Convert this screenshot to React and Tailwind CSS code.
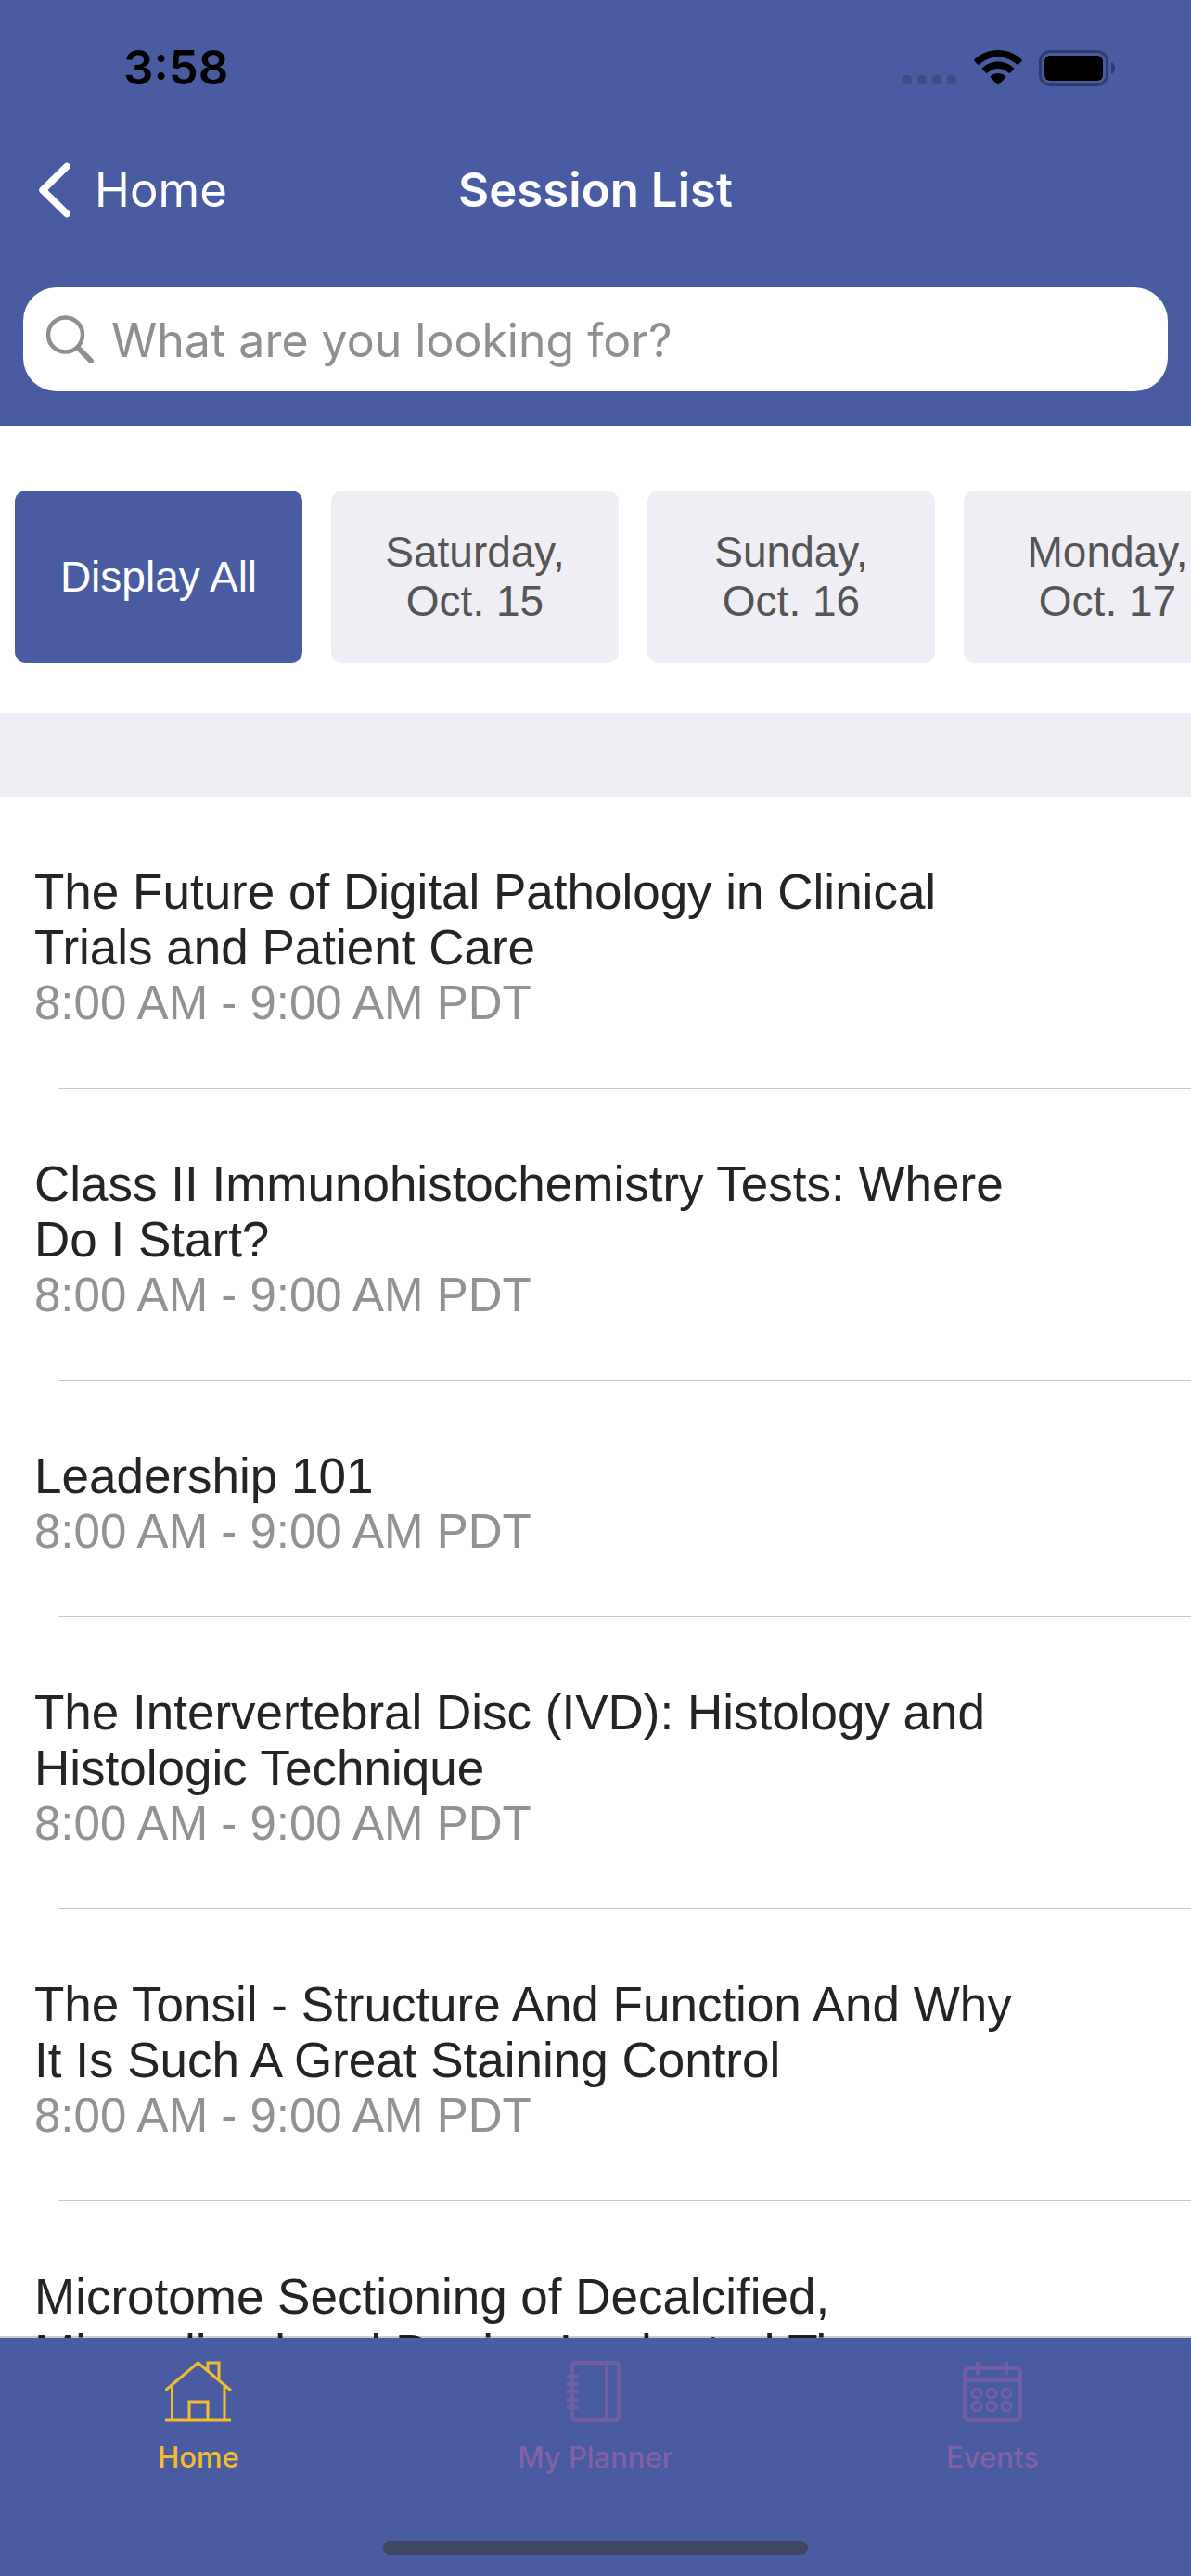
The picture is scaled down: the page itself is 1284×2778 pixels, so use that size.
import React, { useState } from "react";

const days = [
    { id: "all", lines: ["Display All"] },
    { id: "sat", lines: ["Saturday,", "Oct. 15"] },
    { id: "sun", lines: ["Sunday,", "Oct. 16"] },
    { id: "mon", lines: ["Monday,", "Oct. 17"] },
];

const sessions = [
    { id: 1, title: "The Future of Digital Pathology in Clinical Trials and Patient Care", time: "8:00 AM - 9:00 AM PDT" },
    { id: 2, title: "Class II Immunohistochemistry Tests: Where Do I Start?", time: "8:00 AM - 9:00 AM PDT" },
    { id: 3, title: "Leadership 101", time: "8:00 AM - 9:00 AM PDT" },
    { id: 4, title: "The Intervertebral Disc (IVD): Histology and Histologic Technique", time: "8:00 AM - 9:00 AM PDT" },
    { id: 5, title: "The Tonsil - Structure And Function And Why It Is Such A Great Staining Control", time: "8:00 AM - 9:00 AM PDT" },
    { id: 6, title: "Microtome Sectioning of Decalcified, Mineralized and Device Implanted Tissue", time: "8:00 AM - 9:00 AM PDT" },
];

const WifiIcon = () => (
    <svg className="w-[52px] h-[38px]" viewBox="0 0 52 38" fill="black" aria-hidden="true">
        <path d="M26 0C36 0 45 4 51.500 10.300c.5.500.5 1.200 0 1.700l-3.600 3.600c-.5.500-1.200.5-1.700 0C40.800 10.500 33.700 7.500 26 7.500S11.200 10.500 5.800 15.600c-.5.500-1.200.5-1.700 0L.5 12c-.5-.5-.5-1.200 0-1.700C7 4 16 0 26 0z" />
        <path d="M26 12.600c6.500 0 12.400 2.500 16.800 6.600.5.500.5 1.200 0 1.700l-3.700 3.700c-.5.500-1.200.5-1.700 0C34.400 21.700 30.400 20 26 20s-8.400 1.700-11.400 4.600c-.5.500-1.200.5-1.700 0l-3.700-3.700c-.5-.5-.5-1.200 0-1.700C13.600 15.100 19.500 12.600 26 12.600z" />
        <path d="M26 25c3 0 5.800 1.100 7.900 3 .5.500.5 1.200 0 1.700l-7 7.300c-.5.500-1.300.5-1.800 0l-7-7.300c-.5-.5-.5-1.200 0-1.700C20.200 26.100 23 25 26 25z" />
    </svg>
);

const BatteryIcon = () => (
    <svg className="w-[83px] h-[39px]" viewBox="0 0 83 39" aria-hidden="true">
        <rect x="1.500" y="1.500" width="72" height="36" rx="10.500" fill="none" stroke="#2f3b69" strokeWidth="3" />
        <rect x="6" y="6" width="63" height="27" rx="6" fill="black" />
        <path d="M78 13c2.500 1 4 3.500 4 6.500s-1.500 5.500-4 6.500z" fill="#2f3b69" />
    </svg>
);

const BackIcon = () => (
    <svg className="w-[36px] h-[60px]" viewBox="0 0 36 60" fill="none" stroke="white" strokeWidth="7.500" strokeLinecap="round" strokeLinejoin="round" aria-hidden="true">
        <path d="M31 4.500L5 30l26 25.500" />
    </svg>
);

const SearchIcon = () => (
    <svg className="w-[52px] h-[52px]" viewBox="0 0 52 52" fill="none" stroke="#8e8e93" aria-hidden="true">
        <circle cx="20.500" cy="21" r="18.500" strokeWidth="4.500" />
        <path d="M34 35l14 14" strokeWidth="6" strokeLinecap="round" />
    </svg>
);

const HomeIcon = () => (
    <svg className="w-[72px] h-[66px]" viewBox="0 0 72 66" fill="none" stroke="currentColor" strokeWidth="3" aria-hidden="true">
        <path d="M0 32L35.500 2L71 32M7.500 27v37M64 27v37M0 64h71M26 64V44h20v20M46 10V2h12v18" />
    </svg>
);

const PlannerIcon = () => (
    <svg className="w-[72px] h-[66px] opacity-70" viewBox="0 0 72 66" fill="none" stroke="currentColor" strokeWidth="4" aria-hidden="true">
        <path d="M15 2h42q4 0 4 4v54q0 4-4 4H15q-4 0-4-4V6q0-4 4-4zM48 2v62M5 17h13M5 25h13M5 33h13M5 42h13M5 50h13" />
    </svg>
);

const EventsIcon = () => (
    <svg className="w-[72px] h-[66px] opacity-70" viewBox="0 0 72 66" fill="none" stroke="currentColor" strokeWidth="4" aria-hidden="true">
        <path d="M11 8h50q5 0 5 5v46q0 5-5 5H11q-5 0-5-5V13q0-5 5-5zM6 21h60M20 1v14M51 1v14" />
        <g strokeWidth="3">
            <circle cx="19" cy="35" r="5" />
            <circle cx="35" cy="35" r="5" />
            <circle cx="51" cy="35" r="5" />
            <circle cx="19" cy="49" r="5" />
            <circle cx="35" cy="49" r="5" />
            <circle cx="51" cy="49" r="5" />
        </g>
    </svg>
);

const tabs = [
    { id: "home", label: "Home", Icon: HomeIcon },
    { id: "planner", label: "My Planner", Icon: PlannerIcon },
    { id: "events", label: "Events", Icon: EventsIcon },
];

const StatusBar = () => (
    <div className="flex items-center justify-between h-[146px] pl-[133px] pr-[81px]">
        <span className="text-[51px] leading-[60px] font-semibold text-black">3:58</span>
        <div className="flex items-center">
            <div className="flex gap-[6px] mt-[26px] mr-[19px]">
                {[0, 1, 2, 3].map((dot) => (
                    <span key={dot} className="w-[10px] h-[10px] rounded-[4px] bg-[#3e4c84]"></span>
                ))}
            </div>
            <WifiIcon />
            <div className="ml-[18px]">
                <BatteryIcon />
            </div>
        </div>
    </div>
);

const SessionItem = ({ session }) => (
    <li>
        <a href="#session" className="block pl-[37px] pr-[170px] pt-[73px] pb-[61px] leading-[60px]">
            <h2 className="text-[53px] leading-[60px] text-[#242424]">{session.title}</h2>
            <p className="text-[51px] leading-[60px] text-[#929292]">{session.time}</p>
        </a>
        <div className="ml-[62px] h-px bg-[#c8c8cc]"></div>
    </li>
);

const App = () => {
    const [activeDay, setActiveDay] = useState("all");
    const [activeTab, setActiveTab] = useState("home");
    const [query, setQuery] = useState("");

    return (
        <div className="h-screen flex flex-col overflow-hidden bg-white font-['Liberation_Sans',Arial,sans-serif]">
            {/* Header */}
            <header className="shrink-0 bg-[#4a5ca1] pb-[37px] font-[Inter,sans-serif]">
                <StatusBar />
                <div className="grid grid-cols-[1fr_auto_1fr] items-center h-[118px] px-[41px] text-white text-[51px] leading-[60px]">
                    <a href="#home" className="flex items-center gap-[25px]">
                        <BackIcon />
                        Home
                    </a>
                    <h1 className="font-semibold">Session List</h1>
                </div>
                <label className="flex items-center gap-[18px] h-[112px] mt-[46px] mx-[25px] px-[25px] rounded-[36px] bg-white">
                    <SearchIcon />
                    <input
                        type="text"
                        aria-label="Search sessions"
                        placeholder="What are you looking for?"
                        value={query}
                        onChange={(e) => setQuery(e.target.value)}
                        className="flex-1 min-w-0 pt-[2px] outline-none text-[50px] leading-[60px] text-black placeholder:text-[#8e8e93]"
                    />
                </label>
            </header>

            {/* Day filter */}
            <div className="shrink-0 flex gap-[31px] pl-4 pt-[70px] pb-[54px] overflow-hidden">
                {days.map((day) => (
                    <button
                        key={day.id}
                        onClick={() => setActiveDay(day.id)}
                        className={`shrink-0 w-[310px] h-[186px] rounded-xl text-[46px] leading-[53px] ${activeDay === day.id ? "bg-[#4a5ca1] text-white" : "bg-[#efeef4] text-[#555555]"}`}
                    >
                        {day.lines.map((line) => (
                            <span key={line} className="block">{line}</span>
                        ))}
                    </button>
                ))}
            </div>
            <div className="shrink-0 h-[90px] bg-[#efeef4]"></div>

            {/* Sessions */}
            <main className="flex-1 min-h-0 overflow-hidden">
                <ul>
                    {sessions.map((session) => (
                        <SessionItem key={session.id} session={session} />
                    ))}
                </ul>
            </main>

            {/* Tab bar, its hairline lies over the end of the list */}
            <footer className="relative shrink-0 -mt-0.5 bg-[#4a5ca1] bg-clip-padding border-t-2 border-black/20 font-[Inter,sans-serif]">
                <nav className="grid grid-cols-3">
                    {tabs.map(({ id, label, Icon }) => (
                        <button
                            key={id}
                            onClick={() => setActiveTab(id)}
                            className={`flex flex-col items-center gap-[18px] pt-[25px] text-[31px] leading-[40px] font-medium ${activeTab === id ? "text-[#f2bd2c]" : "text-[#8163a5]"}`}
                        >
                            <Icon />
                            {label}
                        </button>
                    ))}
                </nav>
                <div className="w-[458px] h-[15px] mt-[70px] mb-[23px] mx-auto rounded-full bg-[#3e4660]"></div>
            </footer>
        </div>
    );
};

export default App;
